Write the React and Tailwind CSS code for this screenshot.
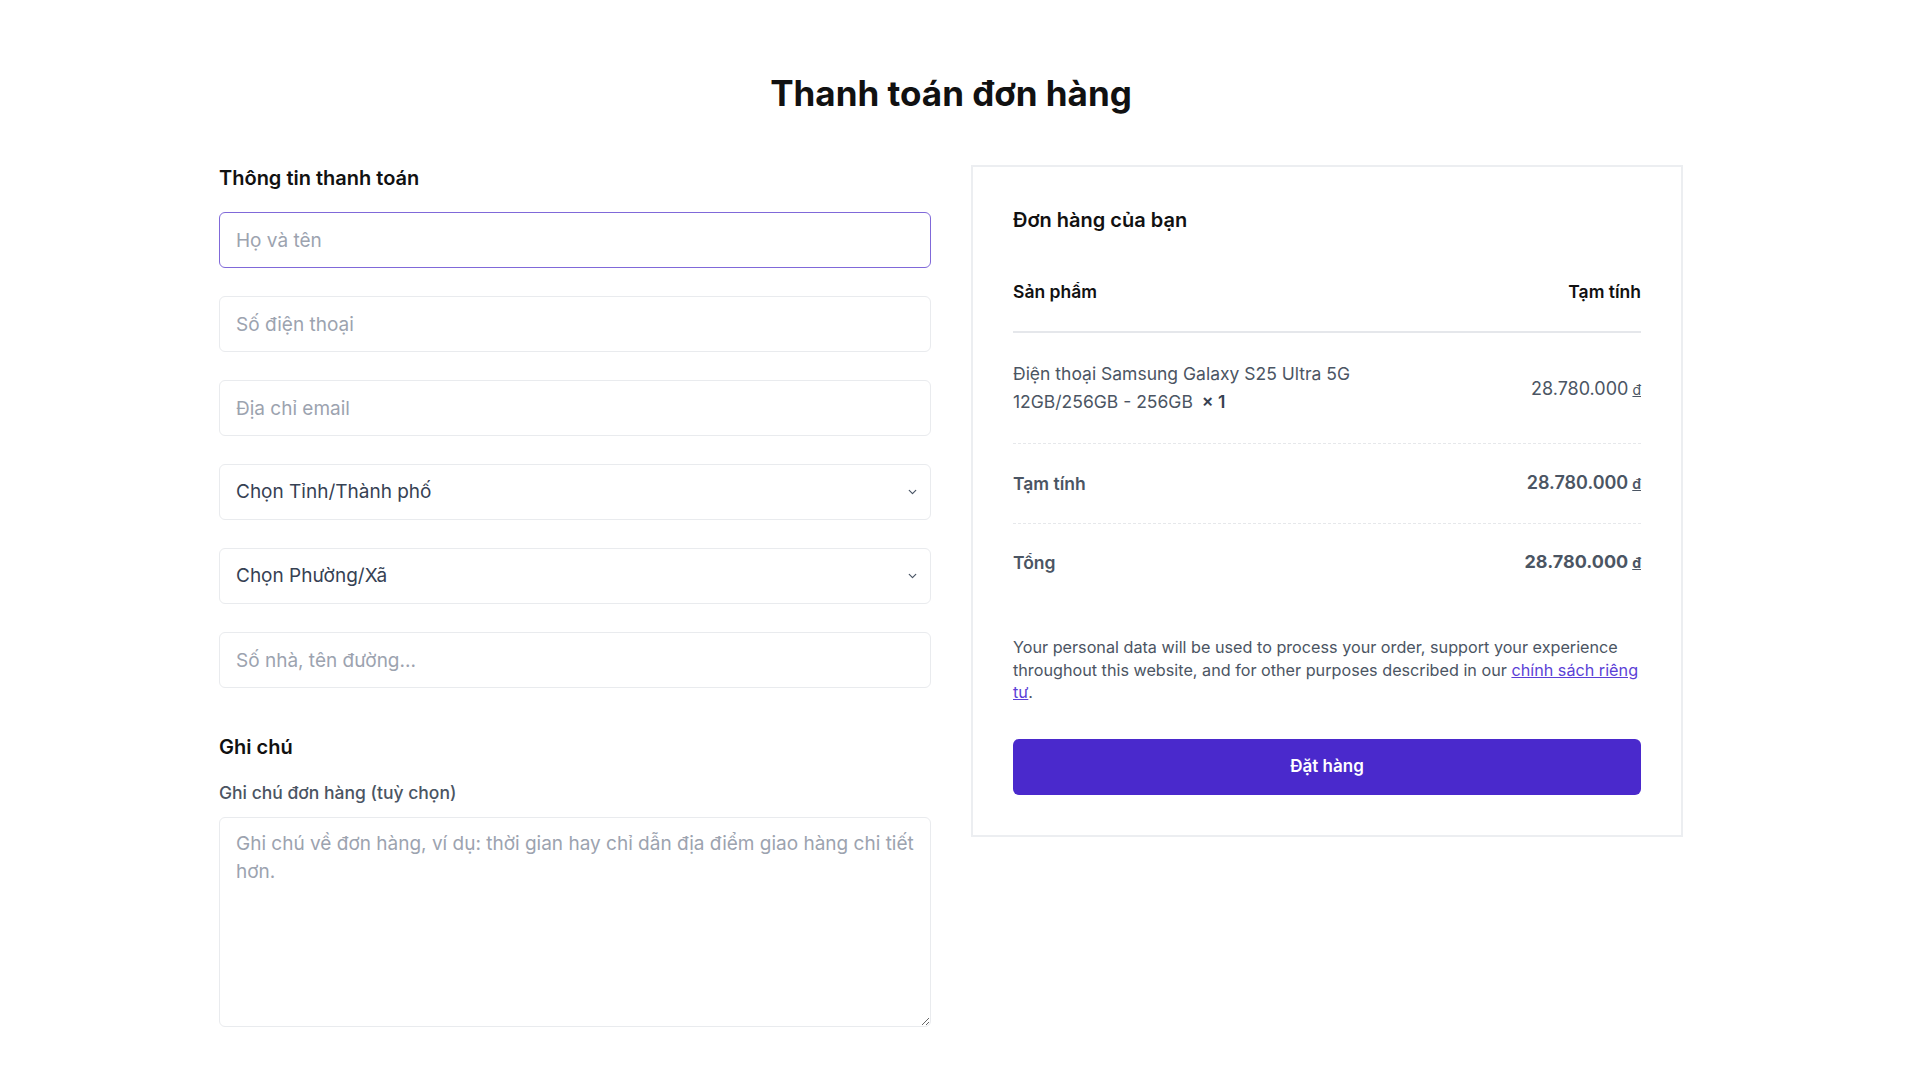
import { ChevronDown } from "lucide-react";

const font = { fontFamily: "Inter, 'Noto Sans', sans-serif" };

const baseField =
  "w-full h-14 px-4 rounded-md border bg-white text-[19px] text-gray-700 placeholder:text-[#9ca3af] outline-none";
const inputCls = `${baseField} border-[#e9ebee]`;
const focusCls = `${baseField} border-[#8069d9]`;

const Dong = () => <span className="underline text-[14px] ml-[4px]">đ</span>;

const SelectBox = ({ label }) => (
  <div className="relative">
    <select className={`${inputCls} appearance-none text-[#4b5563]`} defaultValue="">
      <option value="">{label}</option>
    </select>
    <ChevronDown
      size={13}
      strokeWidth={2.2}
      className="absolute right-3 top-1/2 -translate-y-1/2 text-gray-600 pointer-events-none"
    />
  </div>
);

export default function App() {
  return (
    <div className="min-h-screen bg-white pr-[18px]" style={font}>
      <div className="w-[1464px] mx-auto pt-[73px] pb-16">
        {/* title */}
        <h1 className="text-center text-[35px] leading-10 font-bold text-[#111]">
          Thanh toán đơn hàng
        </h1>

        <div className="grid grid-cols-2 gap-10 mt-[52px] items-start">
          {/* billing form */}
          <div>
            <h2 className="text-[20px] leading-[27px] font-semibold text-[#111] mb-5">
              Thông tin thanh toán
            </h2>
            <div className="flex flex-col gap-7">
              <input className={focusCls} placeholder="Họ và tên" />
              <input className={inputCls} placeholder="Số điện thoại" />
              <input className={inputCls} placeholder="Địa chỉ email" />
              <SelectBox label="Chọn Tỉnh/Thành phố" />
              <SelectBox label="Chọn Phường/Xã" />
              <input className={inputCls} placeholder="Số nhà, tên đường..." />
            </div>

            {/* note */}
            <h2 className="text-[20px] leading-7 font-semibold text-[#111] mt-[45px]">
              Ghi chú
            </h2>
            <label className="block mt-5 text-[17.5px] leading-6 font-medium text-[#4b5563]">
              Ghi chú đơn hàng (tuỳ chọn)
            </label>
            <textarea
              className="block w-full h-[210px] mt-3 px-4 py-3 rounded-md border border-[#e9ebee] text-[19px] leading-7 placeholder:text-[#9ca3af] outline-none"
              placeholder="Ghi chú về đơn hàng, ví dụ: thời gian hay chỉ dẫn địa điểm giao hàng chi tiết hơn."
            />
          </div>

          {/* order summary */}
          <div className="border-2 border-[#eceef1] p-10">
            <h3 className="text-[20px] leading-[26px] font-semibold text-[#111]">
              Đơn hàng của bạn
            </h3>

            <div className="flex justify-between mt-[47px] pb-[27px] border-b-2 border-[#e5e7eb]">
              <span className="text-[17.5px] leading-6 font-semibold text-[#111]">Sản phẩm</span>
              <span className="text-[17.5px] leading-6 font-semibold text-[#111]">Tạm tính</span>
            </div>

            <div className="flex items-center justify-between py-[27px] border-b border-dashed border-[#e6e8eb]">
              <div className="text-[17.5px] leading-7 text-[#4b5563]">
                Điện thoại Samsung Galaxy S25 Ultra 5G
                <br />
                12GB/256GB - 256GB{" "}
                <span className="font-semibold ml-1 text-[#374151]">× 1</span>
              </div>
              <span className="text-[18px] text-[#4b5563]">
                28.780.000
                <Dong />
              </span>
            </div>

            <div className="flex items-center justify-between py-[27px] border-b border-dashed border-[#e6e8eb]">
              <span className="text-[17.5px] leading-6 font-semibold text-[#4b5563]">Tạm tính</span>
              <span className="text-[18px] leading-6 font-semibold text-[#4b5563]">
                28.780.000
                <Dong />
              </span>
            </div>

            <div className="flex items-center justify-between pt-[26px] pb-[27px]">
              <span className="text-[17.5px] leading-6 font-semibold text-[#4b5563]">Tổng</span>
              <span className="text-[18px] leading-6 font-bold text-[#4b5563]">
                28.780.000
                <Dong />
              </span>
            </div>

            <p className="mt-[34px] text-[16.2px] leading-[22.5px] text-[#4b5563]">
              Your personal data will be used to process your order, support your experience
              throughout this website, and for other purposes described in our{" "}
              <a href="#" className="text-[#5b3fd6] underline">
                chính sách riêng tư
              </a>
              .
            </p>

            <button className="mt-[35px] w-full h-14 rounded-md bg-[#4a29cc] text-white text-[17px] font-semibold">
              Đặt hàng
            </button>
          </div>
        </div>
      </div>
    </div>
  );
}
